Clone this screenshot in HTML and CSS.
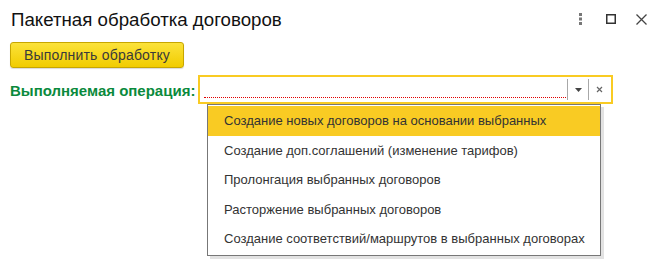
FILE: index.html
```html
<!DOCTYPE html>
<html lang="ru">
<head>
<meta charset="utf-8">
<link rel="stylesheet" href="styles.css">
</head>
<body>
<div class="window">
  <div class="header">
    <div class="title">Пакетная обработка договоров</div>
    <div class="controls">
      <span class="ctl">
        <svg width="6" height="12" viewBox="0 0 6 12"><rect x="1" y="0" width="3" height="3" fill="#777"/><rect x="1" y="4.5" width="3" height="3" fill="#777"/><rect x="1" y="9" width="3" height="3" fill="#777"/></svg>
      </span>
      <span class="ctl">
        <svg width="10" height="10" viewBox="0 0 10 10"><rect x="0.75" y="0.75" width="8.5" height="8.5" fill="none" stroke="#333" stroke-width="1.5"/></svg>
      </span>
      <span class="ctl">
        <svg width="11" height="11" viewBox="0 0 11 11"><path d="M0.5 0.5 L10.5 10.5 M10.5 0.5 L0.5 10.5" stroke="#444" stroke-width="1.3"/></svg>
      </span>
    </div>
  </div>
  <div class="content">
    <button class="btn">Выполнить обработку</button>
    <div class="field">
      <label class="label">Выполняемая операция:</label>
      <div class="input">
        <div class="input-text"></div>
        <div class="sep"></div>
        <div class="ibtn">
          <svg width="7" height="4" viewBox="0 0 7 4"><path d="M0 0 H7 L3.5 4 Z" fill="#444"/></svg>
        </div>
        <div class="sep"></div>
        <div class="ibtn">
          <svg width="7" height="7" viewBox="0 0 7 7"><path d="M1 1 L6 6 M6 1 L1 6" stroke="#666" stroke-width="1.2"/></svg>
        </div>
        <ul class="list">
          <li class="item active">Создание новых договоров на основании выбранных</li>
          <li class="item">Создание доп.соглашений (изменение тарифов)</li>
          <li class="item">Пролонгация выбранных договоров</li>
          <li class="item">Расторжение выбранных договоров</li>
          <li class="item">Создание соответствий/маршрутов в выбранных договорах</li>
        </ul>
      </div>
    </div>
  </div>
</div>
</body>
</html>
```
FILE: styles.css
```css
html, body {
  margin: 0;
  padding: 0;
  background: #fff;
}
body {
  font-family: "Liberation Sans", Arial, sans-serif;
  color: #333;
  width: 662px;
  height: 262px;
  overflow: hidden;
}
.header {
  display: flex;
  align-items: center;
  justify-content: space-between;
  height: 38px;
  padding: 0 6px 0 11px;
}
.title {
  font-size: 18.7px;
  color: #111;
  padding-top: 1px;
}
.controls {
  display: flex;
  align-items: center;
}
.ctl {
  display: flex;
  align-items: center;
  justify-content: center;
  width: 30px;
  height: 20px;
}
.content {
  padding: 4px 10px 0 10px;
}
.btn {
  display: block;
  height: 26px;
  width: 174px;
  padding: 0;
  border: 1px solid #c7a600;
  border-radius: 3px;
  background: linear-gradient(#fbe23a, #f1cc00);
  font-family: "Liberation Sans", Arial, sans-serif;
  font-size: 14px;
  letter-spacing: 0.2px;
  color: #3a3a3a;
  box-shadow: 0 1px 1px rgba(0,0,0,0.15);
}
.field {
  display: flex;
  align-items: center;
  margin-top: 7px;
}
.label {
  font-weight: bold;
  font-size: 15px;
  color: #0a8a3c;
  width: 188px;
  padding-top: 2px;
  white-space: nowrap;
}
.input {
  position: relative;
  display: flex;
  align-items: center;
  box-sizing: border-box;
  width: 415px;
  height: 29px;
  border: 2px solid #f9cb23;
  padding: 2px 2px 2px 4px;
}
.input-text {
  flex: 1;
  align-self: stretch;
  border-bottom: 1px dotted #e00000;
  margin-bottom: 2px;
  margin-right: 1px;
}
.sep {
  width: 1px;
  align-self: stretch;
  background: #a8a8a8;
}
.ibtn {
  width: 20px;
  display: flex;
  align-items: center;
  justify-content: center;
}
.list {
  position: absolute;
  left: 7px;
  top: 27px;
  width: 392px;
  margin: 0;
  padding: 1px 0;
  list-style: none;
  background: #fff;
  border: 1px solid #777;
  box-shadow: 3px 3px 0 #e2e2e2;
  z-index: 2;
}
.item {
  height: 29.5px;
  line-height: 29.5px;
  padding-left: 16px;
  font-size: 13px;
  color: #333;
  white-space: nowrap;
}
.item.active {
  background: #f9cb23;
}
```
